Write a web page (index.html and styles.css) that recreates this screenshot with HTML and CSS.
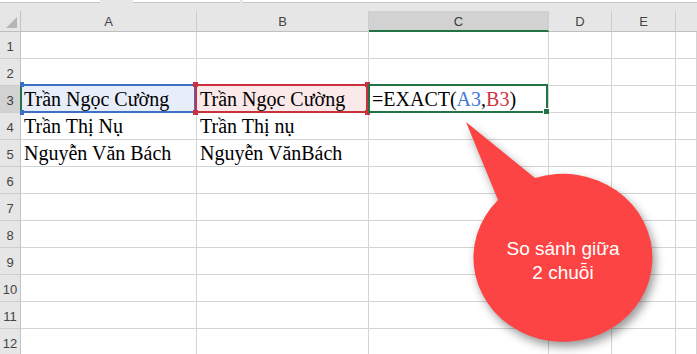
FILE: index.html
```html
<!DOCTYPE html>
<html lang="vi">
<head>
<meta charset="utf-8">
<title>EXACT</title>
<link rel="stylesheet" href="styles.css">
</head>
<body>
<div class="topbar">
  <div class="fbox fbox-name"></div>
  <div class="fbox fbox-mid"></div>
  <div class="fbox fbox-formula"></div>
</div>
<div class="sheet">
  <div class="corner"><span class="tri"></span></div>
  <div class="colhead">A</div>
  <div class="colhead">B</div>
  <div class="colhead active">C</div>
  <div class="colhead">D</div>
  <div class="colhead">E</div>
  <div class="colhead last"></div>

  <div class="rowhead">1</div><div class="cell"></div><div class="cell"></div><div class="cell"></div><div class="cell"></div><div class="cell"></div><div class="cell"></div>
  <div class="rowhead">2</div><div class="cell"></div><div class="cell"></div><div class="cell"></div><div class="cell"></div><div class="cell"></div><div class="cell"></div>
  <div class="rowhead active">3</div>
  <div class="cell ref-a">Trần Ngọc Cường<span class="sel sel-blue"><i class="h tl"></i><i class="h bl"></i><i class="h tr"></i><i class="h br"></i></span></div>
  <div class="cell ref-b">Trần Ngọc Cường<span class="sel sel-red"><i class="h tl"></i><i class="h bl"></i><i class="h tr"></i><i class="h br"></i></span></div>
  <div class="cell cur">=EXACT(<span class="fa">A3</span>,<span class="fb">B3</span>)<span class="sel sel-green"><i class="fill"></i></span></div>
  <div class="cell"></div><div class="cell"></div><div class="cell"></div>
  <div class="rowhead">4</div><div class="cell">Trần Thị Nụ</div><div class="cell">Trần Thị nụ</div><div class="cell"></div><div class="cell"></div><div class="cell"></div><div class="cell"></div>
  <div class="rowhead">5</div><div class="cell">Nguyễn Văn Bách</div><div class="cell">Nguyễn VănBách</div><div class="cell"></div><div class="cell"></div><div class="cell"></div><div class="cell"></div>
  <div class="rowhead">6</div><div class="cell"></div><div class="cell"></div><div class="cell"></div><div class="cell"></div><div class="cell"></div><div class="cell"></div>
  <div class="rowhead">7</div><div class="cell"></div><div class="cell"></div><div class="cell"></div><div class="cell"></div><div class="cell"></div><div class="cell"></div>
  <div class="rowhead">8</div><div class="cell"></div><div class="cell"></div><div class="cell"></div><div class="cell"></div><div class="cell"></div><div class="cell"></div>
  <div class="rowhead">9</div><div class="cell"></div><div class="cell"></div><div class="cell"></div><div class="cell"></div><div class="cell"></div><div class="cell"></div>
  <div class="rowhead">10</div><div class="cell"></div><div class="cell"></div><div class="cell"></div><div class="cell"></div><div class="cell"></div><div class="cell"></div>
  <div class="rowhead">11</div><div class="cell"></div><div class="cell"></div><div class="cell"></div><div class="cell"></div><div class="cell"></div><div class="cell"></div>
  <div class="rowhead">12</div><div class="cell"></div><div class="cell"></div><div class="cell"></div><div class="cell"></div><div class="cell"></div><div class="cell"></div>
</div>

<svg class="callout" width="697" height="354" viewBox="0 0 697 354" aria-hidden="true">
  <path d="M498 200 L466 122 L535 178 A89.5 84 0 1 1 498 200 Z" fill="#fd4444"/>
</svg>
<div class="callout-text">So sánh giữa<br>2 chuỗi</div>
</body>
</html>
```

FILE: styles.css
```css
* { box-sizing: border-box; }

body {
  margin: 0;
  width: 697px;
  height: 354px;
  overflow: hidden;
  position: relative;
  background: #ffffff;
  font-family: "Liberation Serif", "Times New Roman", serif;
}

.topbar {
  height: 11px;
  background: #e6e6e6;
  display: flex;
  gap: 3px;
  align-items: flex-start;
}

.fbox {
  height: 3px;
  background: #ffffff;
  border-bottom: 1px solid #c6c6c6;
}
.fbox-name { width: 100px; }
.fbox-mid { width: 107px; margin-left: 30px; }
.fbox-formula { flex: 1; }

.sheet {
  display: grid;
  grid-template-columns: 21px 176px 172px 180px 63px 64px 1fr;
  grid-template-rows: 21px repeat(12, 27px);
}

.corner {
  background: #e6e6e6;
  border-right: 1px solid #c4c4c4;
  border-bottom: 1px solid #bfbfbf;
  position: relative;
}
.tri {
  position: absolute;
  right: 3px;
  bottom: 3px;
  width: 11px;
  height: 11px;
  background: #b6b6b6;
  clip-path: polygon(100% 0, 100% 100%, 0 100%);
}

.colhead {
  background: #e6e6e6;
  border-right: 1px solid #cdcdcd;
  border-bottom: 1px solid #bfbfbf;
  font-family: "Liberation Sans", Arial, sans-serif;
  font-size: 13px;
  color: #444444;
  display: flex;
  align-items: center;
  justify-content: center;
  padding-top: 1px;
}
.colhead.last { border-right: none; }
.colhead.active {
  background: #d2d2d2;
  border-bottom: 2px solid #217346;
  color: #3a3a3a;
}

.rowhead {
  background: #e6e6e6;
  border-right: 1px solid #c4c4c4;
  border-bottom: 1px solid #cdcdcd;
  font-family: "Liberation Sans", Arial, sans-serif;
  font-size: 13px;
  color: #444444;
  display: flex;
  align-items: flex-end;
  justify-content: center;
  padding-bottom: 4px;
}
.rowhead.active {
  background: #d2d2d2;
  border-right-color: #217346;
  color: #3a3a3a;
}

.cell {
  position: relative;
  border-right: 1px solid #d4d4d4;
  border-bottom: 1px solid #d4d4d4;
  font-size: 20px;
  color: #000000;
  white-space: nowrap;
  display: flex;
  align-items: flex-end;
  padding: 0 0 1px 3px;
}

.ref-a { background: #e7eefa; }
.ref-b { background: #fbe8e9; }

.fa { color: #3f78d4; }
.fb { color: #cf343e; }

.sel {
  position: absolute;
  top: -2px;
  bottom: -1px;
  border: 2px solid;
  z-index: 2;
}
.sel-blue { left: -1px; right: 0; border-color: #3d6fc4; border-left-color: #217346; }
.sel-red { left: -2px; right: 0; border-color: #c9323c; z-index: 3; }
.sel-green { left: -1px; right: 0; border-color: #217346; z-index: 4; }

.h {
  position: absolute;
  width: 5px;
  height: 5px;
}
.sel-blue .h { background: #3d6fc4; }
.sel-red .h { background: #c9323c; }
.h.tl { left: -4px; top: -4px; }
.h.bl { left: -4px; bottom: -4px; }
.h.tr { right: -4px; top: -4px; }
.h.br { right: -4px; bottom: -4px; }
.sel-blue .h.tl, .sel-blue .h.bl { left: -2px; width: 4px; }

.fill {
  position: absolute;
  right: -3px;
  bottom: -3px;
  width: 6px;
  height: 6px;
  background: #217346;
  border-left: 1px solid #ffffff;
  border-top: 1px solid #ffffff;
}

.callout {
  position: absolute;
  left: 0;
  top: 0;
  pointer-events: none;
  filter: drop-shadow(3px 5px 5px rgba(0, 0, 0, 0.4));
  z-index: 10;
}

.callout-text {
  position: absolute;
  left: 473px;
  width: 180px;
  top: 237px;
  text-align: center;
  color: #ffffff;
  font-family: "Liberation Sans", Arial, sans-serif;
  font-size: 19px;
  line-height: 24px;
  z-index: 11;
}
```
